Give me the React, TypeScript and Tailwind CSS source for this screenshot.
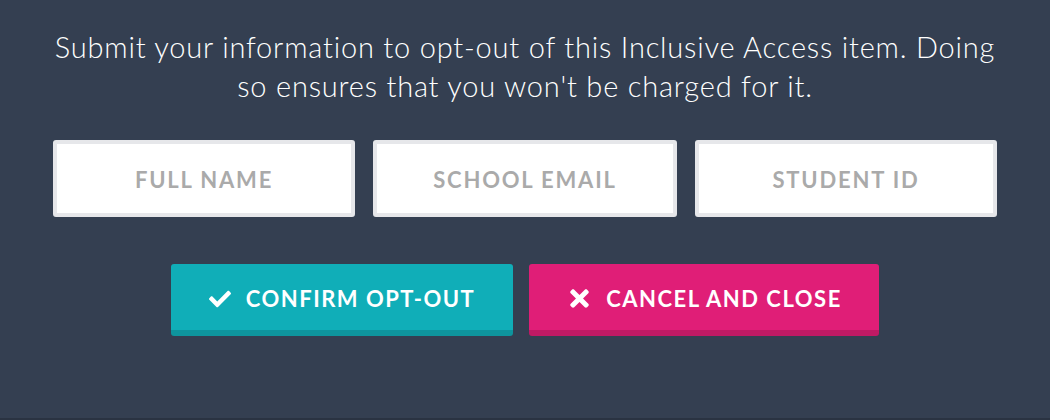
import React from "react";
import { FaCheck, FaTimes } from "react-icons/fa";

export default function App() {
  const fields = ["FULL NAME", "SCHOOL EMAIL", "STUDENT ID"];
  return (
    <div
      className="w-[1050px] h-[420px] bg-[#343f51] border-b-2 border-[#2a3342] flex flex-col items-center"
      style={{ fontFamily: "Lato, 'Open Sans', sans-serif" }}
    >
      <p className="mt-[27px] w-[948px] text-center text-white font-light text-[29px] leading-[39px] tracking-[0.8px]">
        Submit your information to opt-out of this Inclusive Access item. Doing so ensures that you won't be charged for it.
      </p>
      <div className="mt-[35px] grid grid-cols-[302px_304px_302px] gap-[18px]">
        {fields.map((f) => (
          <input
            key={f}
            type="text"
            placeholder={f}
            className="h-[77px] pt-[1px] bg-white border-4 border-[#e6e7ea] rounded-[3px] text-center text-[22px] tracking-[1.8px] font-bold outline-none placeholder:text-[#aaaaaa] placeholder:font-bold"
          />
        ))}
      </div>
      <div className="mt-[47px] flex gap-[16px]">
        <button className="w-[342px] h-[72px] pt-[3px] rounded-[3px] bg-[#10aeb8] border-b-[6px] border-[#0e959d] flex items-center justify-center gap-[15px] text-white font-bold text-[22px] tracking-[1.5px]">
          <FaCheck size={22} />
          <span>CONFIRM OPT-OUT</span>
        </button>
        <button className="w-[350px] h-[72px] pt-[3px] rounded-[3px] bg-[#e01e77] border-b-[6px] border-[#bf1a64] flex items-center justify-center gap-[13px] text-white font-bold text-[22px] tracking-[1.5px]">
          <FaTimes size={27} />
          <span>CANCEL AND CLOSE</span>
        </button>
      </div>
    </div>
  );
}
